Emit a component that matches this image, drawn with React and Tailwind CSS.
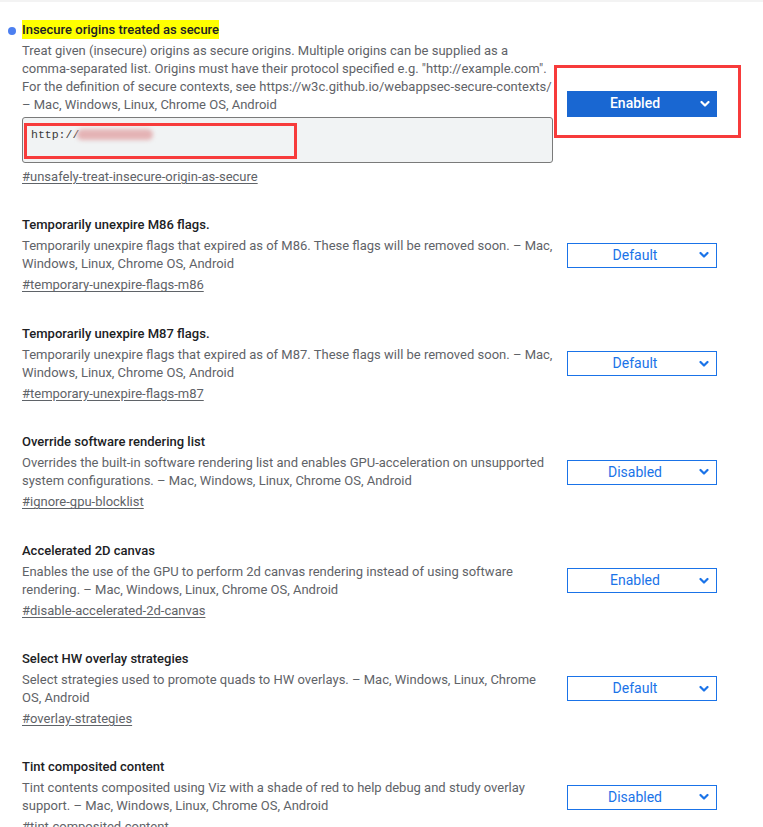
import React from 'react'

const flags = [
  {
    title: 'Insecure origins treated as secure',
    highlighted: true,
    lines: [
      'Treat given (insecure) origins as secure origins. Multiple origins can be supplied as a',
      'comma-separated list. Origins must have their protocol specified e.g. "http://example.com".',
      'For the definition of secure contexts, see https://w3c.github.io/webappsec-secure-contexts/',
      '– Mac, Windows, Linux, Chrome OS, Android',
    ],
    textarea: true,
    link: '#unsafely-treat-insecure-origin-as-secure',
    value: 'Enabled',
    active: true,
  },
  {
    title: 'Temporarily unexpire M86 flags.',
    lines: [
      'Temporarily unexpire flags that expired as of M86. These flags will be removed soon. – Mac,',
      'Windows, Linux, Chrome OS, Android',
    ],
    link: '#temporary-unexpire-flags-m86',
    value: 'Default',
  },
  {
    title: 'Temporarily unexpire M87 flags.',
    lines: [
      'Temporarily unexpire flags that expired as of M87. These flags will be removed soon. – Mac,',
      'Windows, Linux, Chrome OS, Android',
    ],
    link: '#temporary-unexpire-flags-m87',
    value: 'Default',
  },
  {
    title: 'Override software rendering list',
    lines: [
      'Overrides the built-in software rendering list and enables GPU-acceleration on unsupported',
      'system configurations. – Mac, Windows, Linux, Chrome OS, Android',
    ],
    link: '#ignore-gpu-blocklist',
    value: 'Disabled',
  },
  {
    title: 'Accelerated 2D canvas',
    lines: [
      'Enables the use of the GPU to perform 2d canvas rendering instead of using software',
      'rendering. – Mac, Windows, Linux, Chrome OS, Android',
    ],
    link: '#disable-accelerated-2d-canvas',
    value: 'Enabled',
  },
  {
    title: 'Select HW overlay strategies',
    lines: [
      'Select strategies used to promote quads to HW overlays. – Mac, Windows, Linux, Chrome',
      'OS, Android',
    ],
    link: '#overlay-strategies',
    value: 'Default',
  },
  {
    title: 'Tint composited content',
    lines: [
      'Tint contents composited using Viz with a shade of red to help debug and study overlay',
      'support. – Mac, Windows, Linux, Chrome OS, Android',
    ],
    link: '#tint-composited-content',
    value: 'Disabled',
  },
]

function Chevron({ color }) {
  return (
    <svg width="10" height="7" viewBox="0 0 10 7" className="absolute right-[7px] top-1/2 -translate-y-1/2">
      <path d="M1.5 1.5 L5 5 L8.5 1.5" fill="none" stroke={color} strokeWidth="2.2" strokeLinecap="round" strokeLinejoin="round" />
    </svg>
  )
}

function Select({ value, active }) {
  if (active) {
    return (
      <div className="relative">
        <div className="relative flex h-[26px] w-[150px] items-center justify-center bg-[#1967d2] pr-[14px] text-[14px] font-medium text-white">
          {value}
          <Chevron color="#ffffff" />
        </div>
        {/* annotation box */}
        <div className="pointer-events-none absolute -left-[13px] -top-[26px] h-[73px] w-[187px] border-[3px] border-[#f73b3b]" />
      </div>
    )
  }
  return (
    <div className="relative flex h-[25px] w-[150px] items-center justify-center border border-[#1a73e8] pr-[14px] text-[14px] text-[#1a73e8]">
      {value}
      <Chevron color="#1a73e8" />
    </div>
  )
}

function Flag({ flag }) {
  return (
    <div className="relative flex items-center gap-[14px] pb-[28.4px] pl-[22px]">
      {flag.highlighted && (
        <span className="absolute left-[8px] top-[7px] h-[8px] w-[8px] rounded-full bg-[#4c7ff0]" />
      )}
      <div className="w-[531px]">
        <div className="h-[20px] text-[13px] font-medium leading-[20px] text-[#202124]">
          {flag.highlighted ? (
            <span className="inline-block h-[19px] bg-[#ffff00] leading-[20px]">{flag.title}</span>
          ) : (
            flag.title
          )}
        </div>
        <div className="mt-[2px] text-[13px] leading-[18px] text-[#5f6368]">
          {flag.lines.map((l) => (
            <div key={l} className="whitespace-nowrap">{l}</div>
          ))}
        </div>
        {flag.textarea && (
          <div className="relative mt-[3px] h-[46px] w-[531px] rounded-[3px] border border-[#7a7a7a] bg-[#f1f3f4] px-[8px] pt-[8px]">
            <div className="flex items-center text-[11.5px] text-[#3a3a3a]" style={{ fontFamily: '"Liberation Mono", "DejaVu Sans Mono", monospace' }}>
              http://
              <span className="ml-[-2px] h-[11px] w-[76px] rounded-full bg-[#e4b3b5] blur-[2px]" />
            </div>
            <div className="pointer-events-none absolute left-[1px] top-[5px] h-[36px] w-[273px] border-[3px] border-[#f73b3b]" />
          </div>
        )}
        <div className={`${flag.textarea ? 'mt-[4px]' : 'mt-[2px]'} h-[20px] text-[13px] leading-[20px] text-[#5f6368] underline underline-offset-2`}>
          {flag.link}
        </div>
      </div>
      <Select value={flag.value} active={flag.active} />
    </div>
  )
}

export default function App() {
  return (
    <div className="min-h-screen overflow-hidden bg-white" style={{ fontFamily: 'Roboto, "Noto Sans", Arial, sans-serif' }}>
      <div className="h-[2px] bg-[#f3f3f3]" />
      <div className="pt-[18px]">
        {flags.map((f) => (
          <Flag key={f.link} flag={f} />
        ))}
      </div>
    </div>
  )
}
